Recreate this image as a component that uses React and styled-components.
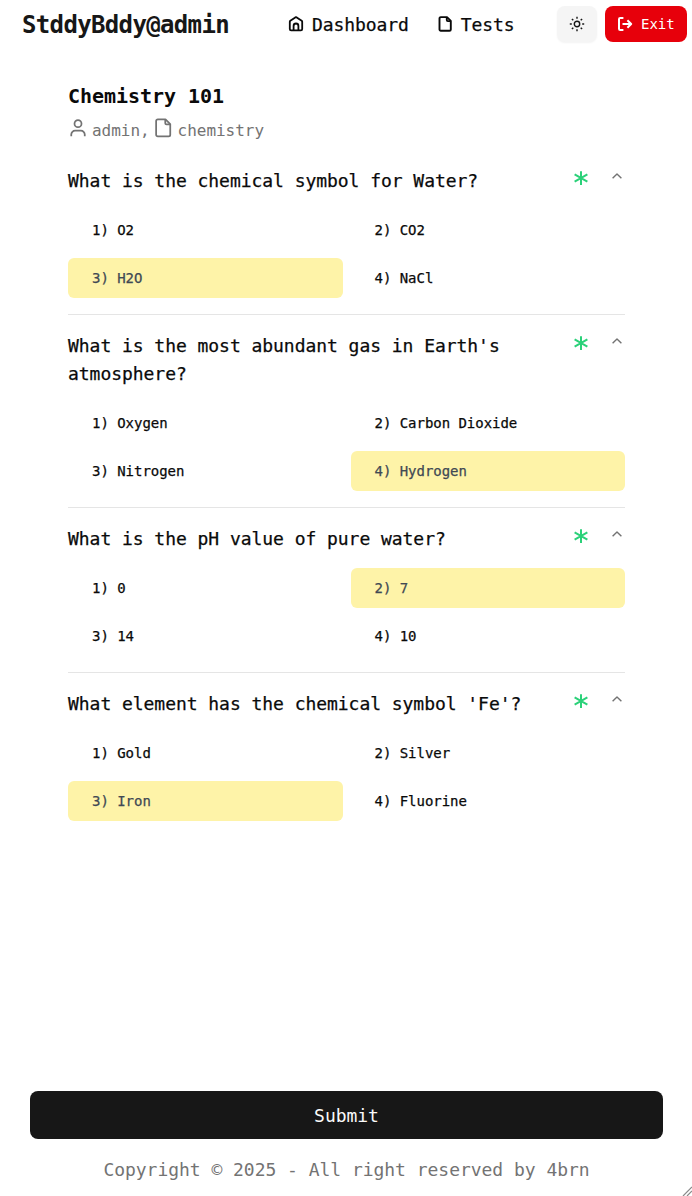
import React from "react";
import styled, { createGlobalStyle } from "styled-components";

const GlobalStyle = createGlobalStyle`
  *, *::before, *::after { box-sizing: border-box; }
  body {
    margin: 0;
    background: #fff;
    color: #0a0a0a;
    font-family: "DejaVu Sans Mono", "Liberation Mono", monospace;
    letter-spacing: -0.002em;
  }
  h1, h2, p { margin: 0; }
  button { font: inherit; letter-spacing: inherit; border: 0; }
`;

const Page = styled.div`
  position: relative;
  display: flex;
  flex-direction: column;
  height: 1196px;
  overflow: hidden;
`;

const Header = styled.header`
  display: flex;
  align-items: center;
  height: 48px;
  padding: 0 5px 0 22px;
`;

const Brand = styled.div`
  width: 266px;
  padding-top: 2px;
  font-size: 24px;
  font-weight: 700;
  line-height: 32px;
  letter-spacing: -0.65px;
  color: #171717;
  white-space: nowrap;
`;

const Nav = styled.nav`
  display: flex;
  gap: 28px;
  flex: 1;
`;

const NavLink = styled.a`
  display: flex;
  align-items: center;
  gap: 8px;
  font-size: 18px;
  line-height: 28px;
  letter-spacing: -0.08px;
  -webkit-text-stroke: 0.25px currentColor;

  span { padding-top: 2px; line-height: 26px; }
`;

const Actions = styled.div`
  display: flex;
  gap: 8px;
`;

const ThemeButton = styled.button`
  display: grid;
  place-items: center;
  width: 40px;
  height: 36px;
  padding: 0;
  border-radius: 8px;
  background: #f5f5f5;
  color: #171717;
  box-shadow: 0 1px 2px rgba(0, 0, 0, 0.05);
`;

const ExitButton = styled.button`
  display: flex;
  align-items: center;
  gap: 8px;
  width: 82px;
  height: 36px;
  padding: 0 12px;
  border-radius: 8px;
  background: #e7000b;
  color: #fff;
  font-size: 14px;
`;

const Main = styled.main`
  flex: 1;
  padding: 34px 67px 0 68px;
`;

const TestTitle = styled.h1`
  font-size: 20px;
  line-height: 28px;
`;

const Meta = styled.div`
  display: flex;
  align-items: center;
  height: 24px;
  margin: 9px 0 7px;
  font-size: 16px;
  line-height: 24px;
  color: #737373;

  svg { margin: -7px 4px 0 0; }
  span + svg { margin: -7px 5px 0 3px; }
`;

const Question = styled.section`
  padding: 16px 0;
  border-bottom: 1px solid #e5e5e5;

  &:last-child { border-bottom: 0; }
`;

const QuestionHead = styled.div`
  display: flex;
  align-items: flex-start;
  padding-top: 1px;
  margin-bottom: 15px;
`;

const QuestionText = styled.h2`
  flex: 1;
  font-size: 18px;
  font-weight: 400;
  line-height: 28px;
  letter-spacing: -0.045px;
  -webkit-text-stroke: 0.25px currentColor;
`;

const Marks = styled.div`
  display: flex;
  align-items: flex-start;
  gap: 18px;
  padding-top: 1px;
  color: #737373;
`;

const Options = styled.div`
  display: grid;
  grid-template-columns: 1fr 1fr;
  gap: 8px;
`;

const Option = styled.button`
  height: 40px;
  padding: 0 24px;
  border-radius: 6px;
  text-align: left;
  font-size: 14px;
  -webkit-text-stroke: 0.25px currentColor;
  background: ${(p) => (p.$selected ? "#fef3a8" : "transparent")};
  color: ${(p) => (p.$selected ? "#414954" : "#0a0a0a")};
`;

const Submit = styled.button`
  height: 48px;
  margin: 0 29px 0 30px;
  border-radius: 8px;
  background: #171717;
  color: #fafafa;
  font-size: 18px;
`;

const Footer = styled.footer`
  height: 57px;
  padding: 17px 0 0 1px;
  text-align: center;
  font-size: 18px;
  line-height: 28px;
  color: #737373;
`;

const ResizeGrip = styled.svg`
  position: absolute;
  right: 0;
  bottom: 0;
`;

const Icon = ({ size = 16, width = 2, color = "currentColor", children }) => (
  <svg width={size} height={size} viewBox="0 0 16 16" fill="none" stroke={color} strokeWidth={width} strokeLinejoin="round">
    {children}
  </svg>
);

const HomeIcon = () => (
  <Icon width={1.8}>
    <path d="M1.8 5.8Q1.8 5.2 2.3 4.8L7.3 1.4Q8 1 8.7 1.4L13.7 4.8Q14.2 5.2 14.2 5.8V13a1.3 1.3 0 0 1-1.3 1.3H3.1A1.3 1.3 0 0 1 1.8 13Z" />
    <path d="M5.6 14V9.9a2.4 2.4 0 0 1 4.8 0V14" />
  </Icon>
);

const FileIcon = ({ size, width }) => (
  <Icon size={size} width={width}>
    <path d="M10 1.1H3.8a1.3 1.3 0 0 0-1.3 1.3v11a1.3 1.3 0 0 0 1.3 1.3h8.7a1.3 1.3 0 0 0 1.3-1.3V4.9L10 1.1Z" />
    <path d="M9.8 1.3v2.8c0 .6.4 1 1 1h2.8" />
  </Icon>
);

const UserIcon = () => (
  <Icon size={20} width={1.4}>
    <circle cx="8" cy="4.5" r="2.8" />
    <path d="M2.6 14.6v-1.4a3.1 3.1 0 0 1 3.1-3.1h4.6a3.1 3.1 0 0 1 3.1 3.1v1.4" />
  </Icon>
);

const SunIcon = () => (
  <Icon width={1.4}>
    <circle cx="8" cy="8" r="2.7" />
    <path d="M8 .8v2M8 13.2v2M.8 8h2M13.2 8h2M2.9 2.9l1.4 1.4M11.7 11.7l1.4 1.4M2.9 13.1l1.4-1.4M11.7 4.3l1.4-1.4" />
  </Icon>
);

const ExitIcon = () => (
  <Icon width={2}>
    <path d="M6.4 2H3.2A1.2 1.2 0 0 0 2 3.2v9.6A1.2 1.2 0 0 0 3.2 14h3.2M5.5 8h8.6M10.4 4.2 14.2 8l-3.8 3.8" />
  </Icon>
);

const AsteriskIcon = () => (
  <Icon size={20} width={1.6} color="#2bd179">
    <path d="M8 2.5v11M2.9 5.1l10.2 5.8M2.9 10.9l10.2-5.8" />
  </Icon>
);

const ChevronIcon = () => (
  <Icon width={1.4}>
    <path d="m3.6 10.3 4.4-4.3 4.4 4.3" />
  </Icon>
);

const questions = [
  { text: "What is the chemical symbol for Water?", options: ["O2", "CO2", "H2O", "NaCl"], selected: 2 },
  { text: "What is the most abundant gas in Earth's atmosphere?", options: ["Oxygen", "Carbon Dioxide", "Nitrogen", "Hydrogen"], selected: 3 },
  { text: "What is the pH value of pure water?", options: ["0", "7", "14", "10"], selected: 1 },
  { text: "What element has the chemical symbol 'Fe'?", options: ["Gold", "Silver", "Iron", "Fluorine"], selected: 2 },
];

export default function App() {
  return (
    <Page>
      <GlobalStyle />
      <Header>
        <Brand>StddyBddy@admin</Brand>
        <Nav>
          <NavLink><HomeIcon /><span>Dashboard</span></NavLink>
          <NavLink><FileIcon width={1.9} /><span>Tests</span></NavLink>
        </Nav>
        <Actions>
          <ThemeButton aria-label="Toggle theme"><SunIcon /></ThemeButton>
          <ExitButton><ExitIcon />Exit</ExitButton>
        </Actions>
      </Header>
      <Main>
        <TestTitle>Chemistry 101</TestTitle>
        <Meta>
          <UserIcon /><span>admin,</span>
          <FileIcon size={20} width={1.4} /><span>chemistry</span>
        </Meta>
        {questions.map((q) => (
          <Question key={q.text}>
            <QuestionHead>
              <QuestionText>{q.text}</QuestionText>
              <Marks><AsteriskIcon /><ChevronIcon /></Marks>
            </QuestionHead>
            <Options>
              {q.options.map((o, i) => (
                <Option key={o} $selected={i === q.selected}>{`${i + 1}) ${o}`}</Option>
              ))}
            </Options>
          </Question>
        ))}
      </Main>
      <Submit>Submit</Submit>
      <Footer>Copyright © 2025 - All right reserved by 4brn</Footer>
      <ResizeGrip width="10" height="10" viewBox="0 0 10 10" stroke="#8a8a8a" strokeWidth="1.2">
        <path d="M1 10 10 1M5 10l5-5" />
      </ResizeGrip>
    </Page>
  );
}
